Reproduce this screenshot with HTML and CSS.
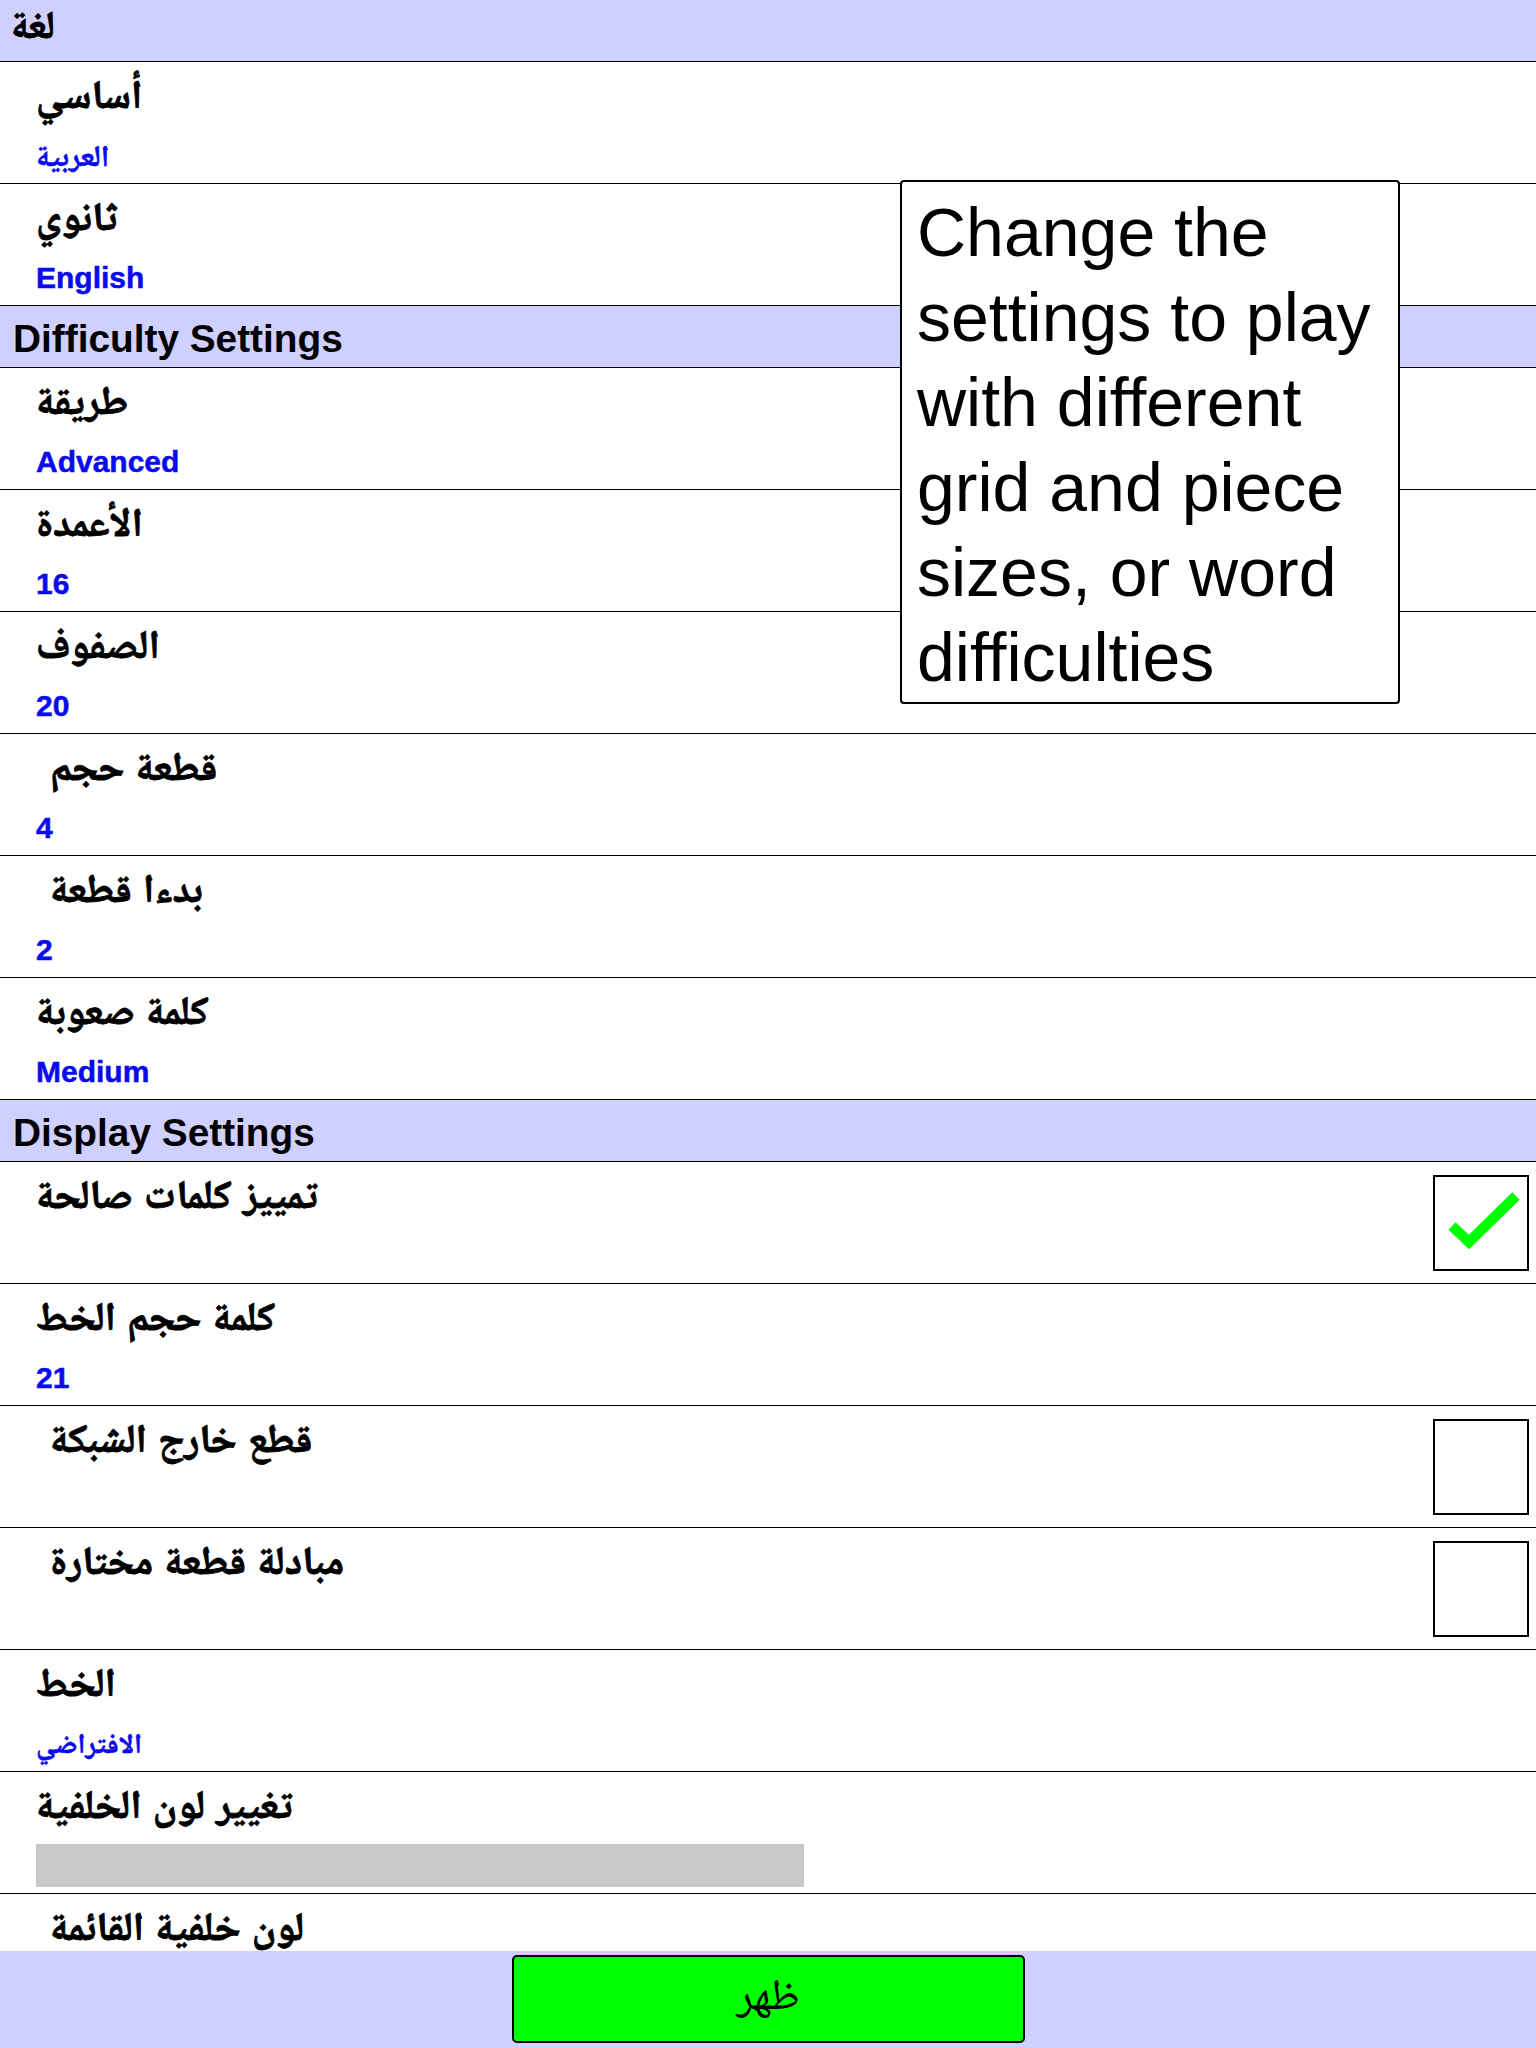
FILE: index.html
```html
<!DOCTYPE html>
<html lang="ar">
<head>
<meta charset="utf-8">
<title>Settings</title>
<link rel="stylesheet" href="styles.css">
</head>
<body>
<div class="screen">
  <div class="list">
    <div class="section ar">لغة</div>
    <div class="item"><div class="text"><div class="title">أساسي</div><div class="value">العربية</div></div></div>
    <div class="item"><div class="text"><div class="title">ثانوي</div><div class="value">English</div></div></div>
    <div class="section">Difficulty Settings</div>
    <div class="item"><div class="text"><div class="title">طريقة</div><div class="value">Advanced</div></div></div>
    <div class="item"><div class="text"><div class="title">الأعمدة</div><div class="value">16</div></div></div>
    <div class="item"><div class="text"><div class="title">الصفوف</div><div class="value">20</div></div></div>
    <div class="item"><div class="text"><div class="title indent">قطعة حجم</div><div class="value">4</div></div></div>
    <div class="item"><div class="text"><div class="title indent">بدءا قطعة</div><div class="value">2</div></div></div>
    <div class="item"><div class="text"><div class="title">كلمة صعوبة</div><div class="value">Medium</div></div></div>
    <div class="section">Display Settings</div>
    <div class="item"><div class="text"><div class="title">تمييز كلمات صالحة</div></div>
      <div class="check">
        <svg width="92" height="92" viewBox="0 0 92 92"><polyline points="17,49 34,65 81,19" fill="none" stroke="#00ff00" stroke-width="10.5" stroke-linejoin="miter"/></svg>
      </div>
    </div>
    <div class="item"><div class="text"><div class="title">كلمة حجم الخط</div><div class="value">21</div></div></div>
    <div class="item"><div class="text"><div class="title indent">قطع خارج الشبكة</div></div><div class="check"></div></div>
    <div class="item"><div class="text"><div class="title indent">مبادلة قطعة مختارة</div></div><div class="check"></div></div>
    <div class="item"><div class="text"><div class="title">الخط</div><div class="value ar">الافتراضي</div></div></div>
    <div class="item"><div class="text"><div class="title">تغيير لون الخلفية</div><div class="swatch"></div></div></div>
    <div class="item"><div class="text"><div class="title indent">لون خلفية القائمة</div></div></div>
  </div>
  <div class="footer"><button class="show">ظهر</button></div>
  <div class="tooltip">Change the settings to play with different grid and piece sizes, or word difficulties</div>
</div>
</body>
</html>
```
FILE: styles.css
```css
html, body {
  margin: 0;
  padding: 0;
}
body {
  width: 1536px;
  height: 2048px;
  overflow: hidden;
  background: #ffffff;
  font-family: "Liberation Sans", "Noto Naskh Arabic", "Droid Arabic Naskh", "Noto Naskh Arabic UI", "Amiri", "Scheherazade New", "FreeSerif", "DejaVu Sans", sans-serif;
  color: #000;
}
.screen {
  position: relative;
  height: 2048px;
  display: flex;
  flex-direction: column;
}
.list {
  flex: 1;
  overflow: hidden;
}
.section {
  box-sizing: border-box;
  height: 62px;
  padding: 11px 0 0 13px;
  background: #d0d0ff;
  border-bottom: 1px solid #000;
  font-size: 38.8px;
  font-weight: bold;
  line-height: 44px;
  white-space: nowrap;
}
.section.ar {
  padding-top: 3px;
  padding-left: 11px;
  -webkit-text-stroke: 0.8px #000;
}
.item {
  box-sizing: border-box;
  height: 122px;
  border-bottom: 1px solid #000;
  display: flex;
  padding: 0 7px 0 36px;
}
.text {
  flex: 1;
  padding-top: 10px;
}
.title {
  font-size: 40px;
  font-weight: bold;
  line-height: 44px;
  height: 44px;
  white-space: nowrap;
  -webkit-text-stroke: 0.8px #000;
}
.title.indent {
  padding-left: 14px;
}
.value {
  margin-top: 23px;
  font-size: 30px;
  font-weight: bold;
  line-height: 34px;
  height: 34px;
  color: #0a0aee;
  white-space: nowrap;
  -webkit-text-stroke: 0.5px #0a0aee;
}
.value.ar {
  font-size: 28px;
}
.swatch {
  margin-top: 18px;
  width: 768px;
  height: 43px;
  background: #c8c8c8;
}
.check {
  align-self: center;
  box-sizing: border-box;
  width: 96px;
  height: 96px;
  border: 2px solid #000;
  background: #fff;
}
.check svg {
  display: block;
}
.footer {
  box-sizing: border-box;
  height: 97px;
  background: #d0d0ff;
  display: flex;
  justify-content: center;
  padding-top: 4px;
}
.show {
  box-sizing: border-box;
  width: 513px;
  height: 88px;
  background: #00ff00;
  border: 2px solid #000;
  border-radius: 5px;
  font-family: inherit;
  font-size: 44px;
  color: #000;
  padding: 0;
}
.tooltip {
  position: absolute;
  left: 900px;
  top: 180px;
  box-sizing: border-box;
  width: 500px;
  height: 524px;
  padding: 8px 15px 0 15px;
  background: #fff;
  border: 2px solid #000;
  border-radius: 4px;
  font-size: 68px;
  line-height: 85px;
}
```
